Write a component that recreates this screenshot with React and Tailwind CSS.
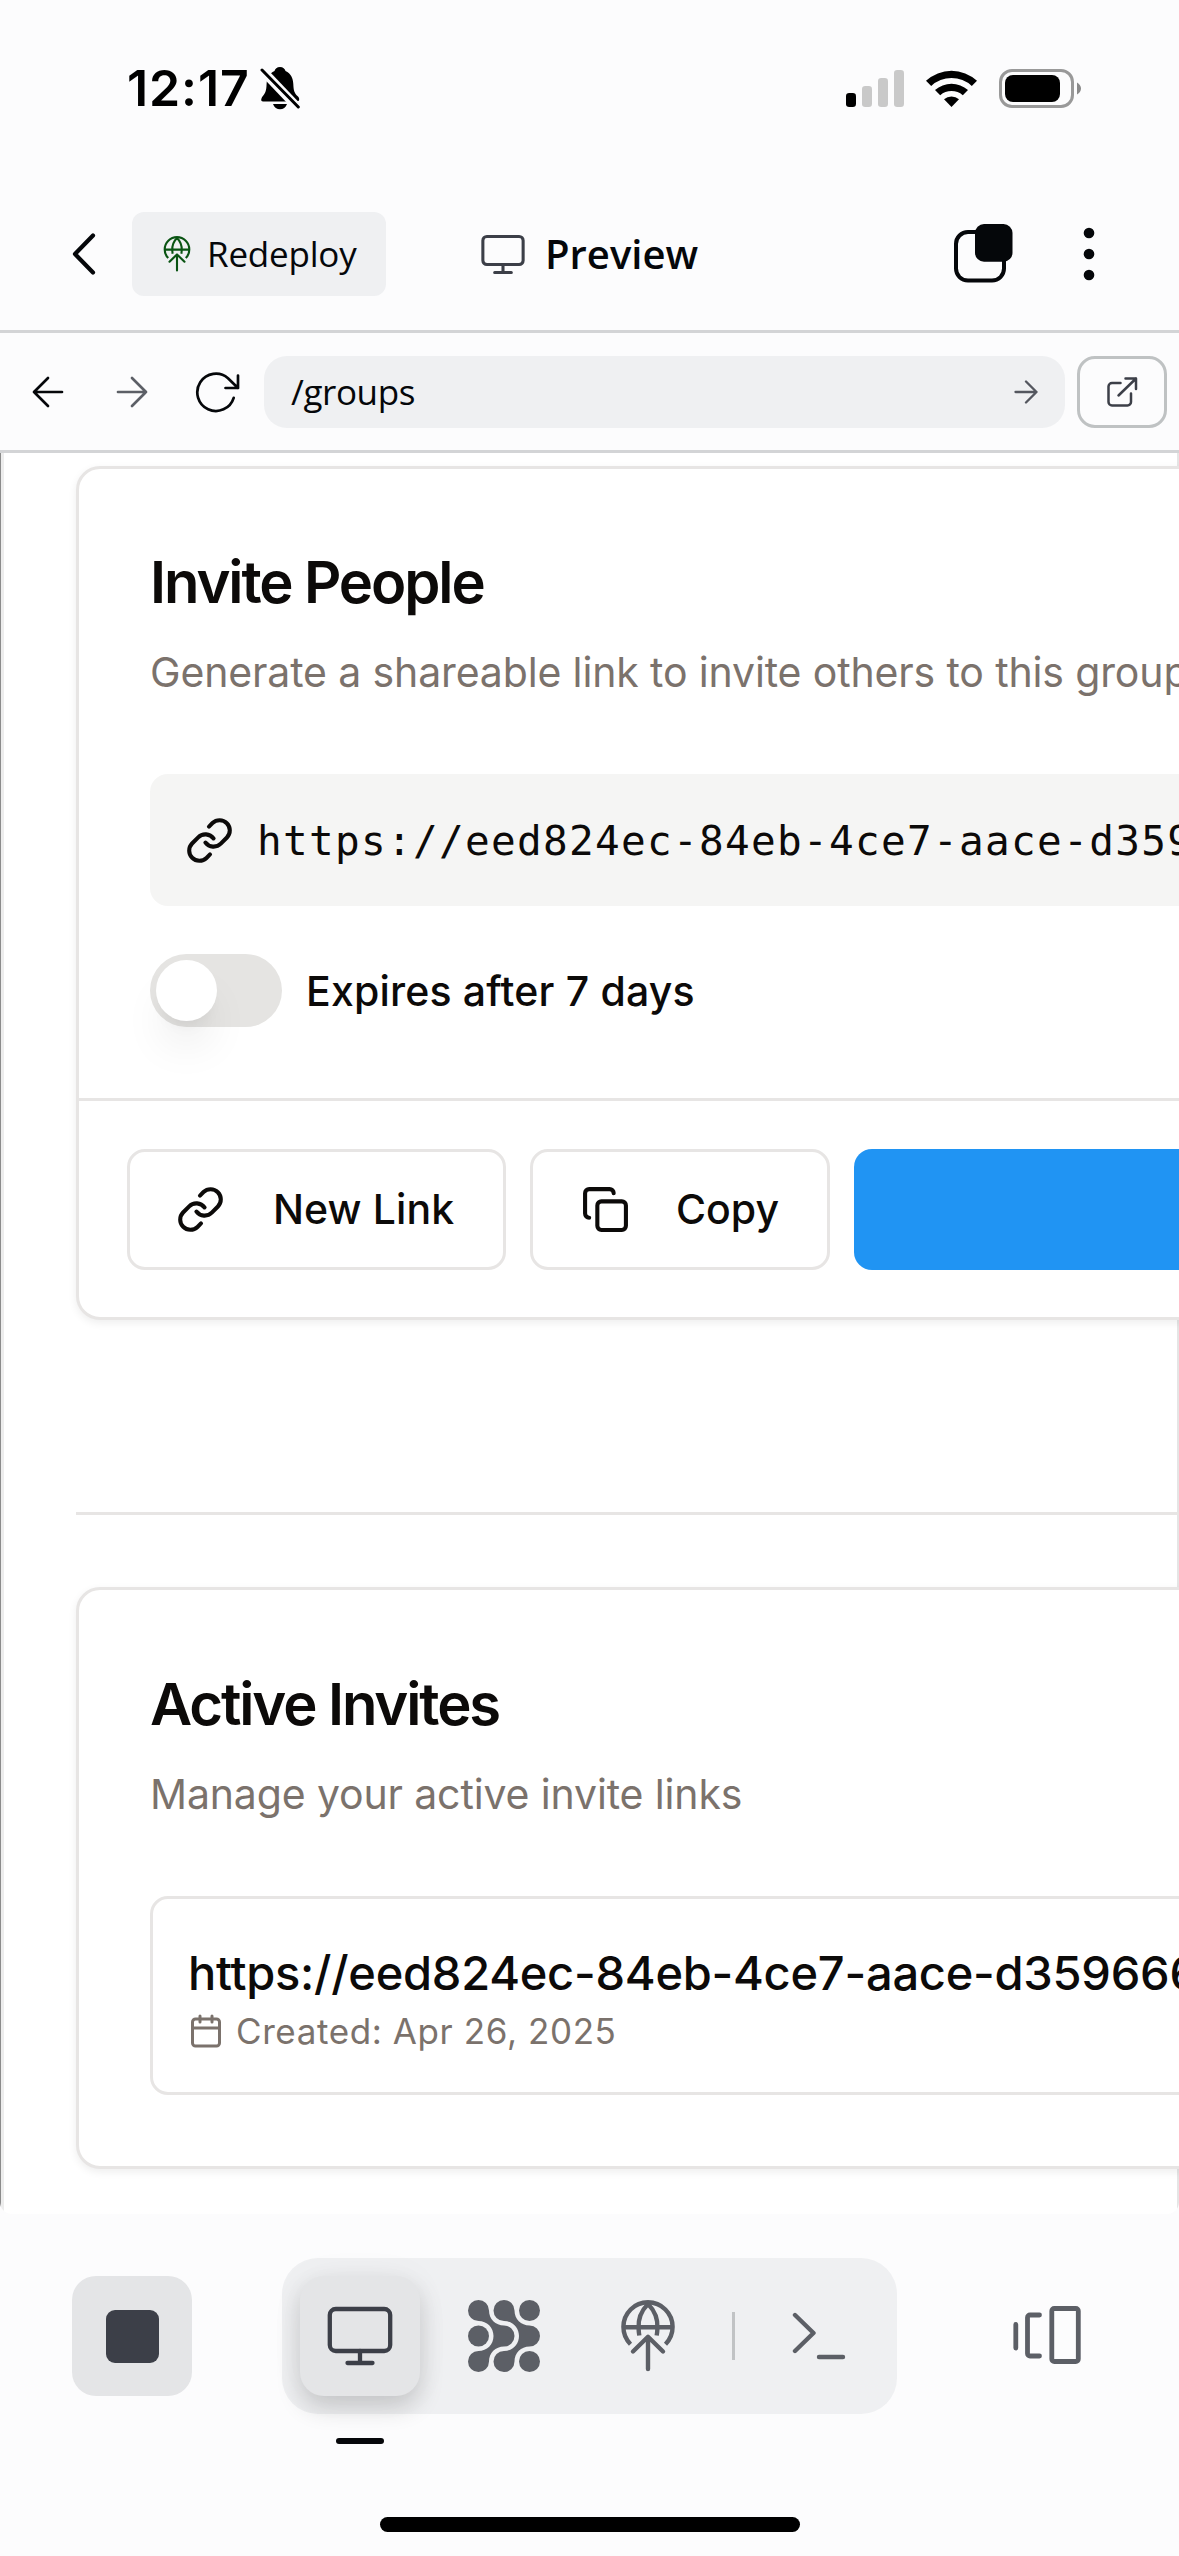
import React from "react";

const ink = "#05070a";

function GlobeUp({ w, h, stroke, className }) {
  return (
    <svg width={w} height={h} viewBox="0 0 54 72" fill="none" stroke="currentColor" strokeWidth={stroke} strokeLinecap="butt" className={className}>
      <path d="M9.5 44.2A24.6 24.6 0 1 1 44.5 44.2" />
      <path d="M2.5 27.2H51.5M27 4C20.5 10.5 17 19.5 17.6 28.5Q17.7 32 18.3 35.5M27 4C33.5 10.5 37 19.5 36.4 28.5Q36.3 32 35.7 35.5" />
      <path d="M12 51.5L27 36.8L42 51.5M27 37V69" strokeLinecap="round" strokeLinejoin="round" />
    </svg>
  );
}

function Monitor({ w, h, stroke }) {
  return (
    <svg width={w} height={h} viewBox="0 0 66 60" fill="none" stroke="currentColor" strokeWidth={stroke} strokeLinecap="round">
      <rect x="2.8" y="3" width="60.4" height="42" rx="6" />
      <path d="M33 45V56M20.5 57H45.5" />
    </svg>
  );
}

function Chain({ size }) {
  return (
    <svg width={size} height={size} viewBox="0 0 24 24" fill="none" stroke="currentColor" strokeWidth="2" strokeLinecap="round" strokeLinejoin="round">
      <path d="M10 13a5 5 0 0 0 7.54.54l3-3a5 5 0 0 0-7.07-7.07l-1.72 1.71" />
      <path d="M14 11a5 5 0 0 0-7.54-.54l-3 3a5 5 0 0 0 7.07 7.07l1.71-1.71" />
    </svg>
  );
}

function StatusBar() {
  return (
    <div className="flex h-[176px] items-center pl-[127px] pr-[98px]">
      <span className="w-[133px] text-[50px] leading-[60px] font-semibold tracking-[0.9px] text-black whitespace-nowrap">12:17</span>
      <svg width="40" height="44" viewBox="0 0 40 44">
        <path d="M20 1c-3 0-5 1.800-5.500 4C9 7.500 7 12 6.600 18 6.300 25 5.500 27 2.500 30.500 1 32.500.500 35.500 3 35.500H37C39.500 35.500 40 32.500 38 30.500 34 27 33.600 24 33.300 18 33 12 31 7.500 25.500 5 25 2.800 23 1 20 1Z" />
        <path d="M13 38h14c-1 3.500-4 5.200-7 5.200s-6-1.700-7-5.200Z" />
        <path d="M-1 1L40 44" stroke="#fcfcfd" strokeWidth="9" />
        <path d="M2 4L38.300 41" stroke="#000" strokeWidth="3" strokeLinecap="round" />
      </svg>
      <div className="ml-auto flex items-center">
        <svg width="58" height="37" viewBox="0 0 58 37">
          <rect x="0" y="23" width="10" height="14" rx="3.200" />
          <g fill="#c9c9c9">
            <rect x="16" y="16" width="10" height="21" rx="3.200" />
            <rect x="32" y="8" width="10" height="29" rx="3.200" />
            <rect x="48" y="0" width="10" height="37" rx="3.200" />
          </g>
        </svg>
        <svg width="51" height="37" viewBox="0 0 51 37" className="ml-[22px]">
          <path d="M0 10.800A37.500 37.500 0 0 1 51 10.800L45.800 16A29.800 29.800 0 0 0 5.200 16Z" />
          <path d="M9 20A25 25 0 0 1 42 20L36.800 25.200A17.300 17.300 0 0 0 14.200 25.200Z" />
          <path d="M18 29.200A12 12 0 0 1 33 29.200L25.500 37Z" />
        </svg>
        <svg width="82" height="39" viewBox="0 0 82 39" className="ml-[22px]">
          <rect x="1.500" y="1.500" width="72" height="36" rx="11.500" fill="none" stroke="#999" strokeWidth="3" />
          <rect x="6" y="6" width="55" height="27" rx="8" />
          <path d="M78 13.500C80.500 15 82 17 82 19.500S80.500 24 78 25.500Z" fill="#8a8a8a" />
        </svg>
      </div>
    </div>
  );
}

function Header() {
  return (
    <div className="flex h-[157px] items-center border-b-[3px] border-[#d3d4d6] pl-[71px] pt-[2px] font-['Open_Sans',sans-serif]">
      <svg width="26" height="44" viewBox="0 0 26 44" fill="none" stroke={ink} strokeWidth="4.200" strokeLinecap="round" strokeLinejoin="round">
        <path d="M22 3.500L4 22L22 40.500" />
      </svg>
      <div className="ml-[35px] flex h-[84px] w-[254px] items-center rounded-[12px] bg-[#eff0f2] pl-[31px]">
        <GlobeUp w="28" h="36" stroke="4.200" className="text-[#0a5413]" />
        <span className="ml-[16px] text-[35px] leading-[48px] tracking-[-0.2px] whitespace-nowrap text-[#05070a]">Redeploy</span>
      </div>
      <div className="ml-[95px] flex items-center text-[#3c3f48]">
        <Monitor w="44" h="41" stroke="4.600" />
        <span className="ml-[20px] text-[40px] leading-[56px] font-semibold tracking-[0px] whitespace-nowrap text-[#05070a]">Preview</span>
      </div>
      <div className="ml-auto mr-[84px] flex items-center">
        <svg width="60" height="60" viewBox="0 0 60 60">
          <rect x="3" y="8" width="48" height="48.600" rx="12" fill="none" stroke={ink} strokeWidth="4" />
          <rect x="22" y="0" width="37.500" height="37.700" rx="9" fill={ink} />
        </svg>
        <svg width="12" height="56" viewBox="0 0 12 56" fill={ink} className="ml-[70px]">
          <circle cx="6" cy="7" r="5.300" />
          <circle cx="6" cy="28" r="5.300" />
          <circle cx="6" cy="49" r="5.300" />
        </svg>
      </div>
    </div>
  );
}

function Arrow({ size, stroke, flip, className }) {
  return (
    <svg width={size} height={size} viewBox="0 0 32 32" fill="none" stroke="currentColor" strokeWidth={stroke} strokeLinecap="round" strokeLinejoin="round" className={className}>
      <path d={flip ? "M30 16H2M16 2L2 16L16 30" : "M2 16H30M16 2L30 16L16 30"} />
    </svg>
  );
}

function AddressBar() {
  return (
    <div className="flex h-[120px] items-center border-b-[3px] border-[#d3d4d6] pl-[32px] pr-[12px] pt-[1px] font-['Open_Sans',sans-serif]">
      <Arrow size="32" stroke="2.700" flip className="text-[#05070a]" />
      <Arrow size="32" stroke="2.700" className="ml-[52px] text-[#5c5f66]" />
      <svg width="46" height="42" viewBox="0 0 46 42" fill="none" stroke={ink} strokeWidth="2.700" strokeLinecap="round" strokeLinejoin="round" className="ml-[47px]">
        <path d="M38.700 26.800A18.600 18.600 0 1 1 33 7.200L43 17M43 4.500V17H30.500" />
      </svg>
      <div className="ml-[23px] flex h-[72px] w-[801px] items-center justify-between rounded-[23px] bg-[#eff0f2] pl-[27px] pr-[27px]">
        <span className="text-[35px] leading-[48px] tracking-[-0.4px] text-[#05070a]">/groups</span>
        <Arrow size="24" stroke="3.100" className="text-[#54575f]" />
      </div>
      <div className="ml-[12px] flex h-[72px] w-[90px] items-center justify-center rounded-[18px] border-[3px] border-[#bfc2c3] text-[#3c3f48]">
        <svg width="32" height="32" viewBox="0 0 32 32" fill="none" stroke="currentColor" strokeWidth="2.500" strokeLinecap="round" strokeLinejoin="round">
          <path d="M14.500 7H6a3.500 3.500 0 0 0-3.500 3.500V26A3.500 3.500 0 0 0 6 29.500H21.500A3.500 3.500 0 0 0 25 26V17.500M19.500 2.500H30V13M30 2.500L12.500 19.500" />
        </svg>
      </div>
    </div>
  );
}

function Card({ title, subtitle, children, className }) {
  return (
    <section className={`relative w-[1500px] rounded-[24px] border-[3px] border-[#e7e5e4] bg-white shadow-[0_3px_9px_rgba(0,0,0,0.07)] ${className}`}>
      <div className="px-[71px]">
        <h2 className="text-[58px] leading-[72px] font-semibold tracking-[-2.1px] text-[#0c0a09]">{title}</h2>
        <p className="mt-[29px] text-[41px] leading-[50px] tracking-[-0.14px] text-[#7b726c]">{subtitle}</p>
      </div>
      {children}
    </section>
  );
}

function InviteCard() {
  return (
    <Card title="Invite People" subtitle="Generate a shareable link to invite others to this group" className="h-[854px] pt-[77px]">
      <div className="ml-[71px] mt-[77px] flex h-[132px] items-center rounded-l-[18px] bg-[#f5f5f4] pl-[35px] text-[#0c0a09]">
        <Chain size="49" />
        <span className="ml-[23px] pt-[2px] font-['DejaVu_Sans_Mono',monospace] text-[41px] leading-[54px] tracking-[1.32px] whitespace-nowrap">https://eed824ec-84eb-4ce7-aace-d35966</span>
      </div>
      <div className="ml-[71px] mt-[48px] flex items-center">
        <div className="flex h-[73px] w-[132px] items-center rounded-full bg-[#e5e4e2] pl-[6px]">
          <div className="size-[61px] rounded-full bg-white shadow-[0_30px_45px_-9px_rgba(0,0,0,0.1),0_12px_18px_-12px_rgba(0,0,0,0.1)]" />
        </div>
        <span className="ml-[24px] text-[41px] leading-[50px] font-medium tracking-[0.18px] text-[#0c0a09]">Expires after 7 days</span>
      </div>
      <div className="mt-[71px] flex gap-[24px] border-t-[3px] border-[#e7e5e4] pt-[48px] pl-[48px] text-[41px] font-medium text-[#0c0a09]">
        <button className="flex h-[121px] w-[379px] items-center rounded-[18px] border-[3px] border-[#e7e5e4] pl-[46px]">
          <Chain size="49" />
          <span className="ml-[48px] tracking-[0.1px]">New Link</span>
        </button>
        <button className="flex h-[121px] w-[300px] items-center rounded-[18px] border-[3px] border-[#e7e5e4] pl-[48px]">
          <svg width="49" height="49" viewBox="0 0 24 24" fill="none" stroke="currentColor" strokeWidth="2" strokeLinecap="round" strokeLinejoin="round">
            <rect width="14" height="14" x="8" y="8" rx="2" />
            <path d="M4 16c-1.100 0-2-.900-2-2V4c0-1.100.900-2 2-2h10c1.100 0 2 .900 2 2" />
          </svg>
          <span className="ml-[46px] tracking-[0px]">Copy</span>
        </button>
        <button className="h-[121px] w-[500px] rounded-[18px] bg-[#2094f3]" />
      </div>
    </Card>
  );
}

function ActiveInvites() {
  return (
    <Card title="Active Invites" subtitle="Manage your active invite links" className="h-[582px] pt-[78px]">
      <div className="ml-[71px] mt-[77px] h-[199px] rounded-l-[18px] border-[3px] border-[#e7e5e4] pt-[45px] pl-[35px]">
        <p className="text-[47px] leading-[58px] font-medium tracking-[-0.25px] whitespace-nowrap text-[#0c0a09]">https://eed824ec-84eb-4ce7-aace-d359666</p>
        <div className="mt-[5px] flex items-center text-[#7b726c]">
          <svg width="36" height="36" viewBox="0 0 24 24" fill="none" stroke="currentColor" strokeWidth="2" strokeLinecap="round" strokeLinejoin="round">
            <path d="M8 2v4M16 2v4M3 10h18" />
            <rect width="18" height="18" x="3" y="4" rx="2" />
          </svg>
          <span className="ml-[12px] text-[35px] leading-[48px] tracking-[0.6px]">Created: Apr 26, 2025</span>
        </div>
      </div>
    </Card>
  );
}

function GridIcon() {
  return (
    <svg width="72" height="72" viewBox="0 0 72 72" fill="currentColor">
      <path d="M10.500 0A10.500 10.500 0 0 1 21 10.500C21 19 27.500 25.500 36 25.500A10.500 10.500 0 0 1 36 46.500C27.500 46.500 21 53 21 61.500A10.500 10.500 0 1 1 10.500 51C19 51 25.500 44.500 25.500 36S19 21 10.500 21A10.500 10.500 0 0 1 10.500 0Z" />
      <path d="M36 0A10.500 10.500 0 0 1 46.500 10.500C46.500 19 53 25.500 61.500 25.500A10.500 10.500 0 0 1 61.500 46.500C53 46.500 46.500 53 46.500 61.500A10.500 10.500 0 1 1 36 51C44.500 51 51 44.500 51 36S44.500 21 36 21A10.500 10.500 0 0 1 36 0Z" />
      <circle cx="61.500" cy="10.500" r="10.500" />
      <circle cx="10.500" cy="36" r="10.500" />
      <circle cx="61.500" cy="61.500" r="10.500" />
    </svg>
  );
}

function Dock() {
  return (
    <div className="flex h-[342px] flex-col items-center">
      <div className="mt-[44px] flex h-[156px] w-full items-center pl-[72px]">
        <div className="flex size-[120px] items-center justify-center rounded-[24px] bg-[#e4e5e7]">
          <div className="size-[53px] rounded-[9px] bg-[#3c3f48]" />
        </div>
        <div className="ml-[90px] flex h-[156px] w-[615px] items-center rounded-[36px] bg-[#eff0f2] pl-[18px] text-[#5c5f66]">
          <div className="flex size-[120px] items-center justify-center rounded-[24px] bg-[#e4e5e7] text-[#3c3f48] shadow-[0_12px_24px_rgba(0,0,0,0.16),0_0px_36px_rgba(0,0,0,0.04)]">
            <Monitor w="66" h="60" stroke="4.300" />
          </div>
          <div className="ml-[48px]"><GridIcon /></div>
          <GlobeUp w="54" h="72" stroke="4.400" className="ml-[81px]" />
          <div className="ml-[57px] h-[48px] w-[3px] bg-[#c1c3c5]" />
          <svg width="54" height="48" viewBox="0 0 54 48" fill="none" stroke="currentColor" strokeWidth="4.400" strokeLinecap="round" strokeLinejoin="round" className="ml-[57px]">
            <path d="M3 3L21.500 21L3 39M27 45H51" />
          </svg>
        </div>
        <svg width="70" height="60" viewBox="0 0 70 60" fill="none" stroke="#5c5f66" strokeWidth="4.800" strokeLinecap="round" strokeLinejoin="round" className="ml-[115px]">
          <path d="M3.800 18.500V42M27.500 9H18a2.500 2.500 0 0 0-2.500 2.500V47.500A2.500 2.500 0 0 0 18 50H27.500" />
          <rect x="39.800" y="2.500" width="26.500" height="53" rx="2.500" />
        </svg>
      </div>
      <div className="mt-[24px] ml-[336px] h-[6px] w-[48px] self-start rounded-full bg-[#05070a]" />
      <div className="mt-[73px] h-[15px] w-[420px] rounded-full bg-black" />
    </div>
  );
}

export default function App() {
  return (
    <div className="h-[2556px] w-[1179px] overflow-hidden bg-[#fcfcfd] font-['Inter',sans-serif]">
      <StatusBar />
      <Header />
      <AddressBar />
      <main className="h-[1761px] overflow-hidden rounded-b-[12px] bg-white">
        <div className="h-[1800px] border-l border-[#8b8b8b] pl-[75px] pt-[13px] shadow-[inset_3px_0_0_#ededed,inset_-2px_0_0_#e5e5e5]">
          <InviteCard />
          <hr className="mt-[192px] w-[1500px] border-0 border-t-[3px] border-[#e7e5e4]" />
          <div className="mt-[72px]"><ActiveInvites /></div>
        </div>
      </main>
      <Dock />
    </div>
  );
}
